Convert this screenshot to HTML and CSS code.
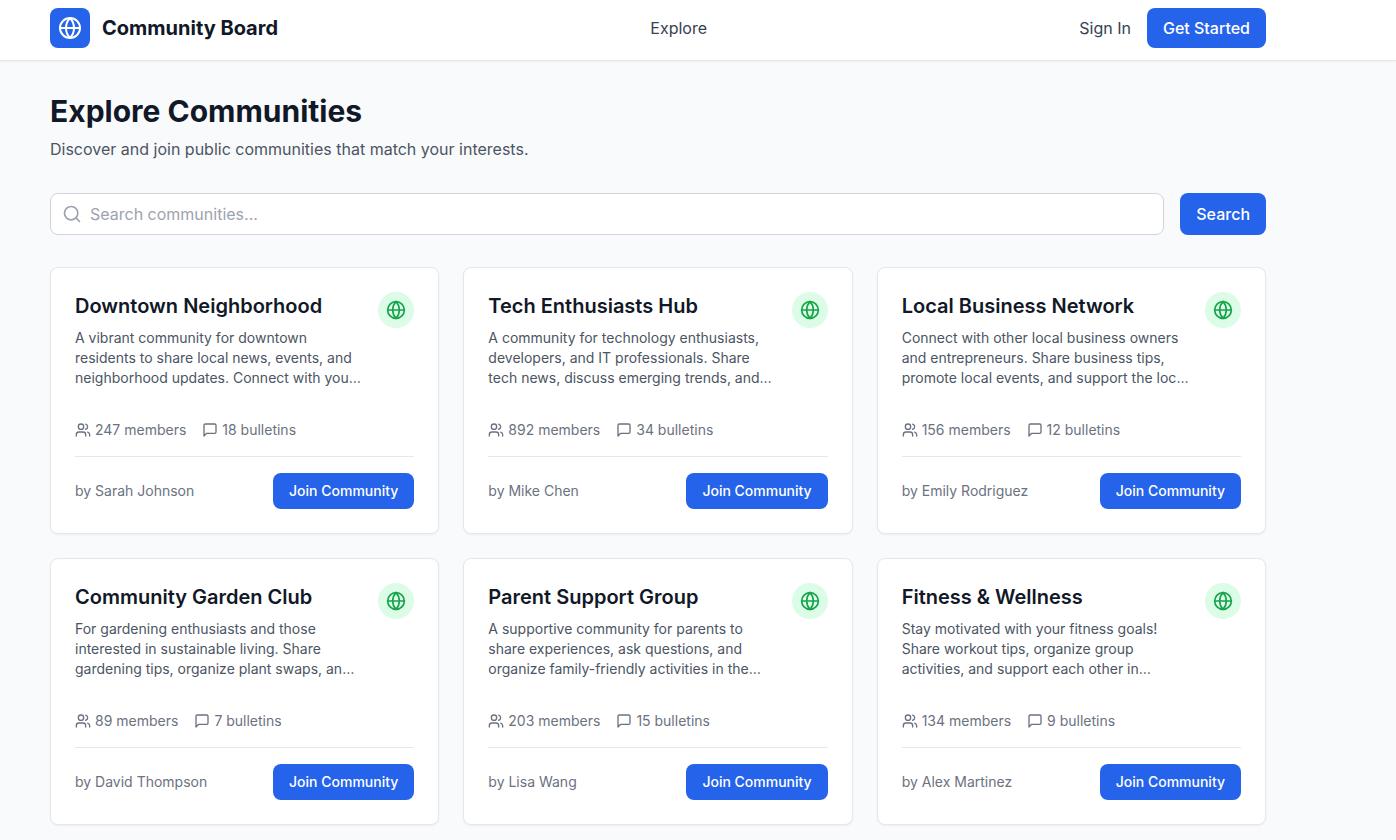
FILE: index.html
```html
<!DOCTYPE html>
<html lang="en">
<head>
    <meta charset="UTF-8">
    <meta name="viewport" content="width=device-width, initial-scale=1.0">
    <title>Community Board</title>
    <link rel="stylesheet" href="styles.css">
</head>
<body>
    <svg class="sprite" aria-hidden="true">
        <symbol id="globe" viewBox="0 0 24 24">
            <circle cx="12" cy="12" r="10"/>
            <path d="M12 2a14.5 14.5 0 0 0 0 20 14.5 14.5 0 0 0 0-20"/>
            <path d="M2 12h20"/>
        </symbol>
        <symbol id="users" viewBox="0 0 24 24">
            <path d="M16 21v-2a4 4 0 0 0-4-4H6a4 4 0 0 0-4 4v2"/>
            <circle cx="9" cy="7" r="4"/>
            <path d="M22 21v-2a4 4 0 0 0-3-3.87"/>
            <path d="M16 3.13a4 4 0 0 1 0 7.75"/>
        </symbol>
        <symbol id="message" viewBox="0 0 24 24">
            <path d="M21 15a2 2 0 0 1-2 2H7l-4 4V5a2 2 0 0 1 2-2h14a2 2 0 0 1 2 2z"/>
        </symbol>
        <symbol id="search" viewBox="0 0 24 24">
            <circle cx="11" cy="11" r="8"/>
            <path d="m21 21-4.3-4.3"/>
        </symbol>
    </svg>

    <header class="header">
        <div class="container header-row">
            <a class="logo" href="#">
                <span class="logo-icon"><svg class="icon icon-lg"><use href="#globe"/></svg></span>
                Community Board
            </a>
            <nav>
                <a class="nav-link" href="#">Explore</a>
            </nav>
            <div class="header-actions">
                <a class="nav-link" href="#">Sign In</a>
                <a class="btn" href="#">Get Started</a>
            </div>
        </div>
    </header>

    <main class="container main">
        <h1>Explore Communities</h1>
        <p class="subtitle">Discover and join public communities that match your interests.</p>

        <form class="search">
            <label class="search-box">
                <svg class="icon icon-md" aria-hidden="true"><use href="#search"/></svg>
                <input type="text" placeholder="Search communities..." aria-label="Search communities">
            </label>
            <button class="btn" type="button">Search</button>
        </form>

        <div class="grid">
            <article class="card">
                <div class="card-top">
                    <div class="card-text">
                        <h2>Downtown Neighborhood</h2>
                        <p>A vibrant community for downtown residents to share local news, events, and neighborhood updates. Connect with your neighbors and stay informed.</p>
                    </div>
                    <span class="badge"><svg class="icon icon-md"><use href="#globe"/></svg></span>
                </div>
                <div class="stats">
                    <span class="stat"><svg class="icon"><use href="#users"/></svg>247 members</span>
                    <span class="stat"><svg class="icon"><use href="#message"/></svg>18 bulletins</span>
                </div>
                <div class="card-bottom">
                    <span>by Sarah Johnson</span>
                    <button class="btn btn-sm" type="button">Join Community</button>
                </div>
            </article>

            <article class="card">
                <div class="card-top">
                    <div class="card-text">
                        <h2>Tech Enthusiasts Hub</h2>
                        <p>A community for technology enthusiasts, developers, and IT professionals. Share tech news, discuss emerging trends, and collaborate on projects.</p>
                    </div>
                    <span class="badge"><svg class="icon icon-md"><use href="#globe"/></svg></span>
                </div>
                <div class="stats">
                    <span class="stat"><svg class="icon"><use href="#users"/></svg>892 members</span>
                    <span class="stat"><svg class="icon"><use href="#message"/></svg>34 bulletins</span>
                </div>
                <div class="card-bottom">
                    <span>by Mike Chen</span>
                    <button class="btn btn-sm" type="button">Join Community</button>
                </div>
            </article>

            <article class="card">
                <div class="card-top">
                    <div class="card-text">
                        <h2>Local Business Network</h2>
                        <p>Connect with other local business owners and entrepreneurs. Share business tips, promote local events, and support the local economy.</p>
                    </div>
                    <span class="badge"><svg class="icon icon-md"><use href="#globe"/></svg></span>
                </div>
                <div class="stats">
                    <span class="stat"><svg class="icon"><use href="#users"/></svg>156 members</span>
                    <span class="stat"><svg class="icon"><use href="#message"/></svg>12 bulletins</span>
                </div>
                <div class="card-bottom">
                    <span>by Emily Rodriguez</span>
                    <button class="btn btn-sm" type="button">Join Community</button>
                </div>
            </article>

            <article class="card">
                <div class="card-top">
                    <div class="card-text">
                        <h2>Community Garden Club</h2>
                        <p>For gardening enthusiasts and those interested in sustainable living. Share gardening tips, organize plant swaps, and maintain our gardens.</p>
                    </div>
                    <span class="badge"><svg class="icon icon-md"><use href="#globe"/></svg></span>
                </div>
                <div class="stats">
                    <span class="stat"><svg class="icon"><use href="#users"/></svg>89 members</span>
                    <span class="stat"><svg class="icon"><use href="#message"/></svg>7 bulletins</span>
                </div>
                <div class="card-bottom">
                    <span>by David Thompson</span>
                    <button class="btn btn-sm" type="button">Join Community</button>
                </div>
            </article>

            <article class="card">
                <div class="card-top">
                    <div class="card-text">
                        <h2>Parent Support Group</h2>
                        <p>A supportive community for parents to share experiences, ask questions, and organize family-friendly activities in the neighborhood.</p>
                    </div>
                    <span class="badge"><svg class="icon icon-md"><use href="#globe"/></svg></span>
                </div>
                <div class="stats">
                    <span class="stat"><svg class="icon"><use href="#users"/></svg>203 members</span>
                    <span class="stat"><svg class="icon"><use href="#message"/></svg>15 bulletins</span>
                </div>
                <div class="card-bottom">
                    <span>by Lisa Wang</span>
                    <button class="btn btn-sm" type="button">Join Community</button>
                </div>
            </article>

            <article class="card">
                <div class="card-top">
                    <div class="card-text">
                        <h2>Fitness &amp; Wellness</h2>
                        <p>Stay motivated with your fitness goals! Share workout tips, organize group activities, and support each other in maintaining healthy lifestyles.</p>
                    </div>
                    <span class="badge"><svg class="icon icon-md"><use href="#globe"/></svg></span>
                </div>
                <div class="stats">
                    <span class="stat"><svg class="icon"><use href="#users"/></svg>134 members</span>
                    <span class="stat"><svg class="icon"><use href="#message"/></svg>9 bulletins</span>
                </div>
                <div class="card-bottom">
                    <span>by Alex Martinez</span>
                    <button class="btn btn-sm" type="button">Join Community</button>
                </div>
            </article>
        </div>
    </main>
</body>
</html>
```

FILE: styles.css
```css
* {
    box-sizing: border-box;
    margin: 0;
    padding: 0;
}
body {
    font-family: Inter, sans-serif;
    font-size: 16px;
    line-height: 24px;
    color: #111827;
    background-color: #f9fafb;
}
a {
    color: inherit;
    text-decoration: none;
}
.sprite {
    display: none;
}
.icon {
    width: 16px;
    height: 16px;
    flex-shrink: 0;
    fill: none;
    stroke: currentColor;
    stroke-width: 2;
    stroke-linecap: round;
    stroke-linejoin: round;
}
.icon-md {
    width: 20px;
    height: 20px;
}
.icon-lg {
    width: 24px;
    height: 24px;
}
.container {
    max-width: 1280px;
    margin-left: 18px;
    padding: 0 32px;
}

/* header */
.header {
    background-color: #fff;
    border-bottom: 1px solid #e5e7eb;
    box-shadow: 0 1px 2px rgba(0, 0, 0, 0.05);
    padding: 8px 0 12px;
}
.header-row {
    display: flex;
    justify-content: space-between;
    align-items: center;
}
.logo {
    display: flex;
    align-items: center;
    gap: 12px;
    font-size: 20px;
    font-weight: 700;
}
.logo-icon {
    display: flex;
    padding: 8px;
    border-radius: 8px;
    color: #fff;
    background-color: #2563eb;
}
.nav-link {
    color: #374151;
}
.header-actions {
    display: flex;
    align-items: center;
    gap: 16px;
}
.btn {
    padding: 8px 16px;
    border: none;
    border-radius: 8px;
    font-family: inherit;
    font-size: 16px;
    font-weight: 500;
    line-height: 24px;
    color: #fff;
    background-color: #2563eb;
    cursor: pointer;
}
.btn:hover {
    background-color: #1d4ed8;
}
.btn-sm {
    font-size: 14px;
    line-height: 20px;
}

/* page intro and search */
.main {
    padding-top: 32px;
    padding-bottom: 32px;
}
h1 {
    font-size: 30px;
    font-weight: 700;
    line-height: 36px;
    margin-bottom: 8px;
}
.subtitle {
    color: #4b5563;
    margin-bottom: 32px;
}
.search {
    display: flex;
    gap: 16px;
    margin-bottom: 32px;
}
.search-box {
    flex: 1;
    display: flex;
    align-items: center;
    gap: 8px;
    padding: 8px 11px;
    border: 1px solid #d1d5db;
    border-radius: 8px;
    color: #9ca3af;
    background-color: #fff;
}
.search-box input {
    flex: 1;
    border: none;
    outline: none;
    font: inherit;
    color: #111827;
    background: none;
}
.search-box input::placeholder {
    color: #9ca3af;
}

/* community cards */
.grid {
    display: grid;
    grid-template-columns: repeat(3, 1fr);
    gap: 24px;
}
.card {
    padding: 24px;
    border: 1px solid #e5e7eb;
    border-radius: 8px;
    font-size: 14px;
    line-height: 20px;
    color: #6b7280;
    background-color: #fff;
    box-shadow: 0 1px 2px rgba(0, 0, 0, 0.05);
}
.card-top {
    display: flex;
    align-items: flex-start;
    gap: 16px;
    margin-bottom: 32px;
}
.card-text {
    flex: 1;
}
.card-text h2 {
    font-size: 20px;
    font-weight: 600;
    line-height: 28px;
    color: #111827;
    margin-bottom: 8px;
}
.card-text p {
    display: -webkit-box;
    -webkit-box-orient: vertical;
    -webkit-line-clamp: 3;
    overflow: hidden;
    color: #4b5563;
}
.badge {
    display: flex;
    padding: 8px;
    border-radius: 50%;
    color: #16a34a;
    background-color: #dcfce7;
}
.stats {
    display: flex;
    gap: 16px;
    margin-bottom: 16px;
}
.stat {
    display: flex;
    align-items: center;
    gap: 4px;
}
.card-bottom {
    display: flex;
    justify-content: space-between;
    align-items: center;
    padding-top: 16px;
    border-top: 1px solid #e5e7eb;
}
```
